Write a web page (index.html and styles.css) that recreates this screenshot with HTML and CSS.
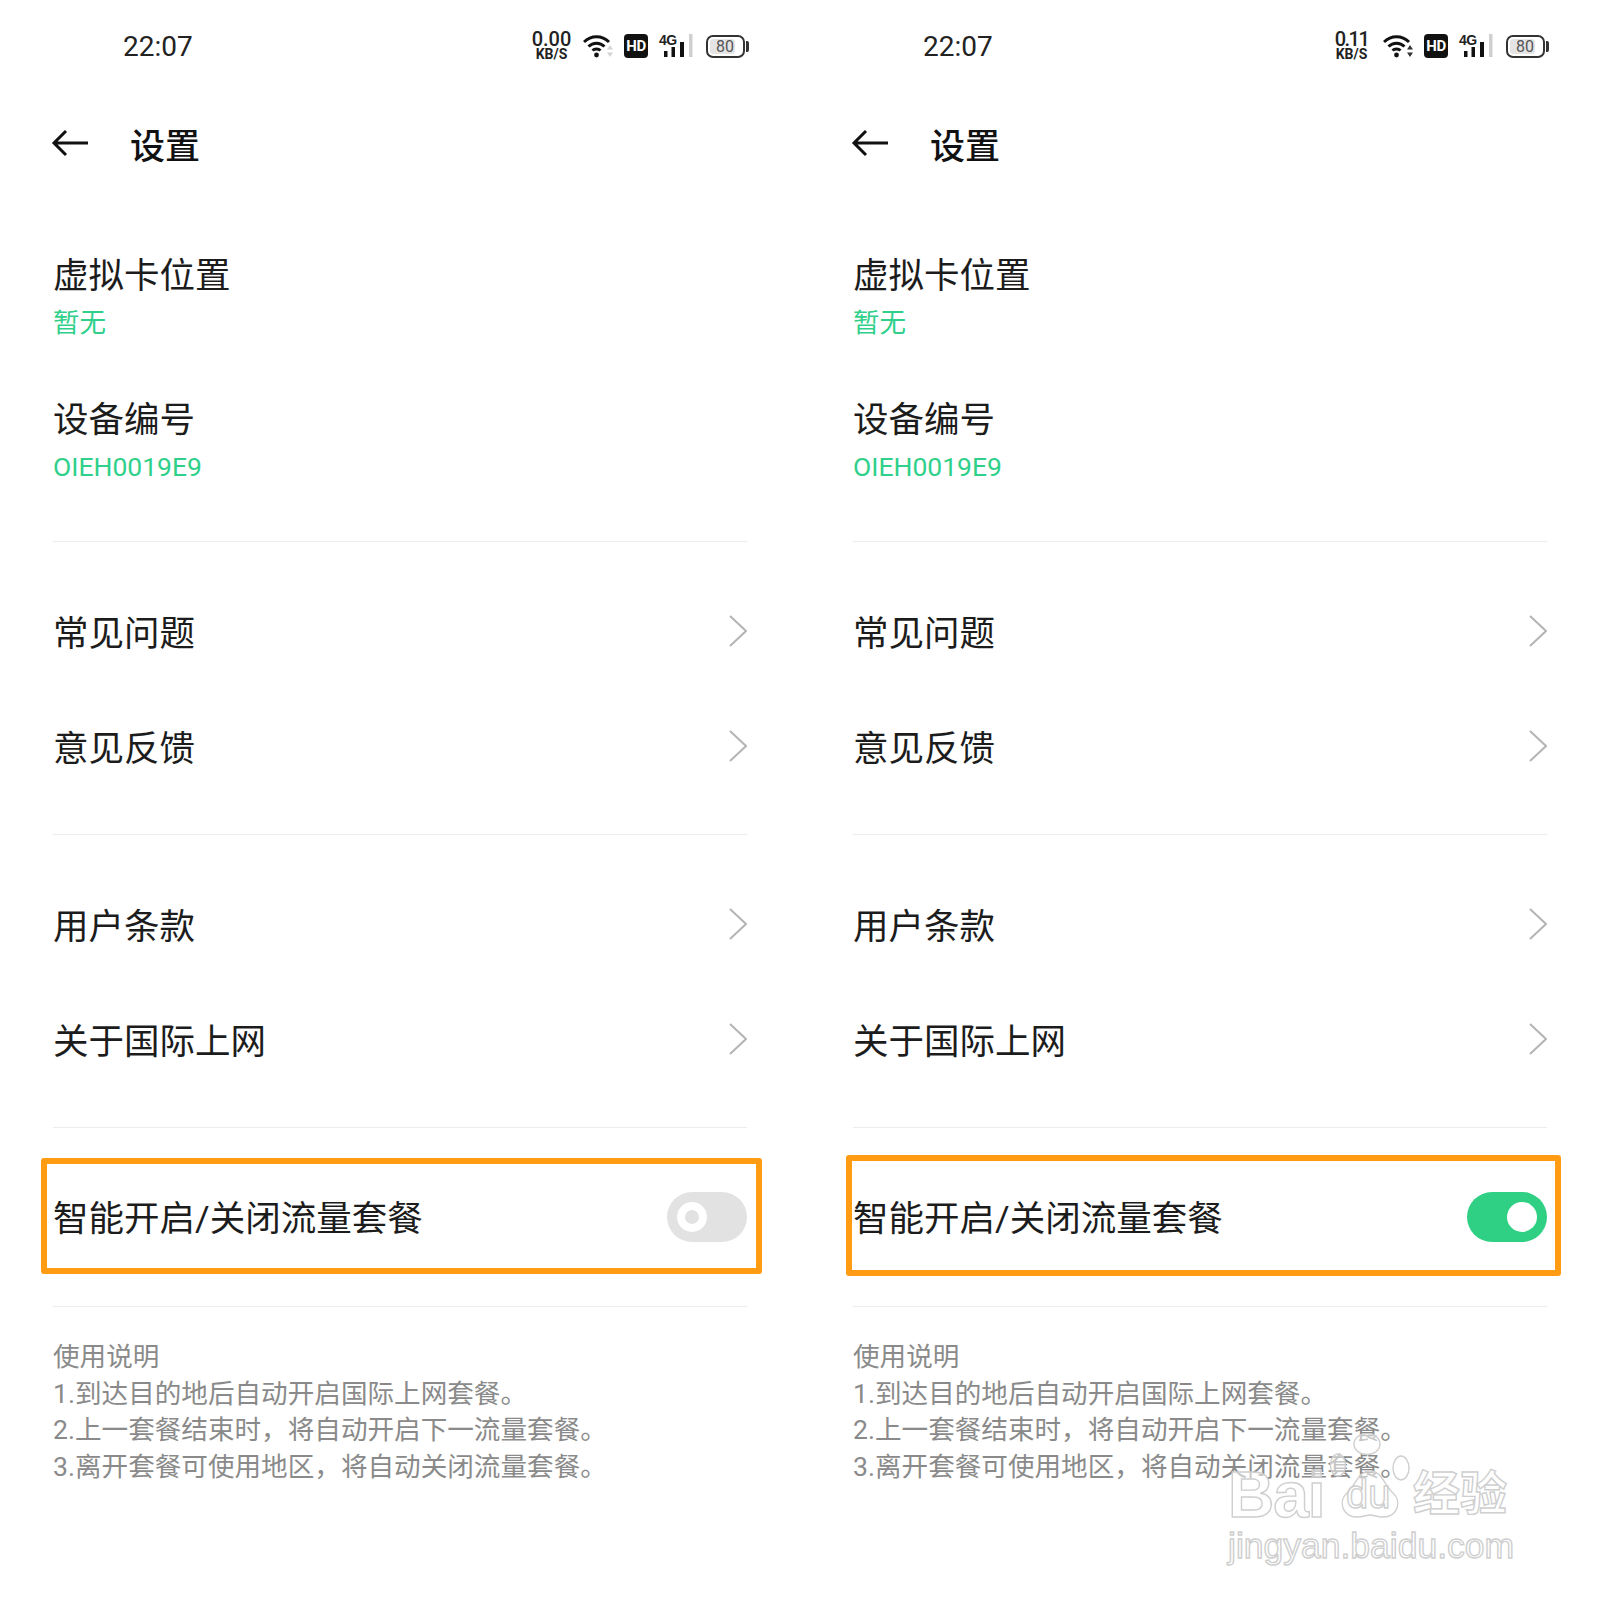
FILE: index.html
```html
<!DOCTYPE html>
<html lang="zh-CN">
<head>
	<meta charset="UTF-8">
	<title>设置</title>
	<link rel="stylesheet" href="styles.css">
</head>
<body>
	<div class="side-by-side-container">
		<!-- before -->
		<div class="phone">
			<div class="status-bar">
				<span class="time">22:07</span>
				<div class="speed"><b>0.00</b><small>KB/S</small></div>
				<svg class="wifi" viewBox="0 0 30 24"><path d="M1 8C8 1 19 1 26 8M5.5 12.5C10 8 17 8 21.5 12.5M9.5 16.5C11.5 14.5 15.5 14.5 17.5 16.5" fill="none" stroke="#111" stroke-width="3"/><circle cx="13.5" cy="21" r="2.4" fill="#111"/><path class="wifi-arrows faint" d="M27 11l-3 4.5h6zM27 23l-3-4.5h6z"/></svg>
				<div class="hd">HD</div>
				<svg class="signal" viewBox="0 0 34 24"><rect x="5" y="17" width="3.5" height="6" fill="#111"/><rect x="12.5" y="13" width="3.5" height="10" fill="#111"/><rect x="21" y="8" width="4" height="15" fill="#111"/><rect x="30" y="0" width="3.5" height="23" fill="#d0d0d0"/><text x="0" y="11" class="signal-label">4G</text></svg>
				<div class="battery"><span class="battery-level">80</span></div>
			</div>
			<div class="title-bar">
				<svg class="back" viewBox="0 0 37 28"><path d="M37 14H3M15 2L3 14l12 12" fill="none" stroke="#111" stroke-width="3"/></svg>
				<h1>设置</h1>
			</div>
			<div class="info-group">
				<div class="info-item"><div class="label">虚拟卡位置</div><div class="value">暂无</div></div>
				<div class="info-item"><div class="label">设备编号</div><div class="value">OIEH0019E9</div></div>
			</div>
			<div class="link-group">
				<div class="link-row"><span class="label">常见问题</span><svg class="chevron" viewBox="0 0 18 32"><path d="M1 1l16 15L1 31" fill="none" stroke="#b4b4b4" stroke-width="2"/></svg></div>
				<div class="link-row"><span class="label">意见反馈</span><svg class="chevron" viewBox="0 0 18 32"><path d="M1 1l16 15L1 31" fill="none" stroke="#b4b4b4" stroke-width="2"/></svg></div>
			</div>
			<div class="link-group">
				<div class="link-row"><span class="label">用户条款</span><svg class="chevron" viewBox="0 0 18 32"><path d="M1 1l16 15L1 31" fill="none" stroke="#b4b4b4" stroke-width="2"/></svg></div>
				<div class="link-row"><span class="label">关于国际上网</span><svg class="chevron" viewBox="0 0 18 32"><path d="M1 1l16 15L1 31" fill="none" stroke="#b4b4b4" stroke-width="2"/></svg></div>
			</div>
			<div class="switch-group">
				<div class="switch-row">
					<span class="label">智能开启/关闭流量套餐</span>
					<div class="toggle"><span class="knob"></span></div>
					<div class="highlight"></div>
				</div>
			</div>
			<div class="notes">
				<div>使用说明</div>
				<div>1.到达目的地后自动开启国际上网套餐。</div>
				<div>2.上一套餐结束时，将自动开启下一流量套餐。</div>
				<div>3.离开套餐可使用地区，将自动关闭流量套餐。</div>
			</div>
		</div>

		<!-- after -->
		<div class="phone">
			<div class="status-bar">
				<span class="time">22:07</span>
				<div class="speed narrow"><b>0.11</b><small>KB/S</small></div>
				<svg class="wifi" viewBox="0 0 30 24"><path d="M1 8C8 1 19 1 26 8M5.5 12.5C10 8 17 8 21.5 12.5M9.5 16.5C11.5 14.5 15.5 14.5 17.5 16.5" fill="none" stroke="#111" stroke-width="3"/><circle cx="13.5" cy="21" r="2.4" fill="#111"/><path class="wifi-arrows" d="M27 11l-3 4.5h6zM27 23l-3-4.5h6z"/></svg>
				<div class="hd">HD</div>
				<svg class="signal" viewBox="0 0 34 24"><rect x="5" y="17" width="3.5" height="6" fill="#111"/><rect x="12.5" y="13" width="3.5" height="10" fill="#111"/><rect x="21" y="8" width="4" height="15" fill="#111"/><rect x="30" y="0" width="3.5" height="23" fill="#d0d0d0"/><text x="0" y="11" class="signal-label">4G</text></svg>
				<div class="battery"><span class="battery-level">80</span></div>
			</div>
			<div class="title-bar">
				<svg class="back" viewBox="0 0 37 28"><path d="M37 14H3M15 2L3 14l12 12" fill="none" stroke="#111" stroke-width="3"/></svg>
				<h1>设置</h1>
			</div>
			<div class="info-group">
				<div class="info-item"><div class="label">虚拟卡位置</div><div class="value">暂无</div></div>
				<div class="info-item"><div class="label">设备编号</div><div class="value">OIEH0019E9</div></div>
			</div>
			<div class="link-group">
				<div class="link-row"><span class="label">常见问题</span><svg class="chevron" viewBox="0 0 18 32"><path d="M1 1l16 15L1 31" fill="none" stroke="#b4b4b4" stroke-width="2"/></svg></div>
				<div class="link-row"><span class="label">意见反馈</span><svg class="chevron" viewBox="0 0 18 32"><path d="M1 1l16 15L1 31" fill="none" stroke="#b4b4b4" stroke-width="2"/></svg></div>
			</div>
			<div class="link-group">
				<div class="link-row"><span class="label">用户条款</span><svg class="chevron" viewBox="0 0 18 32"><path d="M1 1l16 15L1 31" fill="none" stroke="#b4b4b4" stroke-width="2"/></svg></div>
				<div class="link-row"><span class="label">关于国际上网</span><svg class="chevron" viewBox="0 0 18 32"><path d="M1 1l16 15L1 31" fill="none" stroke="#b4b4b4" stroke-width="2"/></svg></div>
			</div>
			<div class="switch-group">
				<div class="switch-row">
					<span class="label">智能开启/关闭流量套餐</span>
					<div class="toggle on"><span class="knob"></span></div>
					<div class="highlight wide"></div>
				</div>
			</div>
			<div class="notes">
				<div>使用说明</div>
				<div>1.到达目的地后自动开启国际上网套餐。</div>
				<div>2.上一套餐结束时，将自动开启下一流量套餐。</div>
				<div>3.离开套餐可使用地区，将自动关闭流量套餐。</div>
			</div>
		</div>
	</div>

	<div class="watermark">
		<div class="watermark-top">
			<span class="wm-bai">Bai</span>
			<div class="wm-paw">
				<svg viewBox="0 0 80 85"><g fill="rgba(255,255,255,.5)" stroke="#cfcfcf" stroke-width="1.4"><ellipse cx="8" cy="32" rx="7.5" ry="11"/><ellipse cx="37" cy="11" rx="13" ry="10.5"/><ellipse cx="71" cy="35" rx="8" ry="12"/><path d="M40 38C28 38 26 52 17 60C8 68 12 84 27 84C34 84 36 82 40 82C44 82 46 84 53 84C68 84 72 68 63 60C54 52 52 38 40 38Z"/></g></svg>
				<span class="wm-du">du</span>
			</div>
			<span class="wm-cn">经验</span>
		</div>
		<div class="wm-url">jingyan.baidu.com</div>
	</div>
</body>
</html>
```

FILE: styles.css
```css
body {
	margin: 0;
	background: #fff;
	color: #1c1c1c;
	font-family: Roboto, "Noto Sans CJK SC", sans-serif;
	position: relative;
}
.side-by-side-container {
	display: grid;
	grid-template-columns: repeat(2, 800px);
	height: 1600px;
}
.phone {
	padding: 0 53px;
}

/* status bar */
.status-bar {
	height: 92px;
	display: flex;
	align-items: center;
	margin-right: -3px;
}
.time {
	margin-left: 70px;
	margin-right: auto;
	font-size: 28px;
	color: #222;
}
.speed {
	width: 39px;
	margin-right: 12px;
	display: flex;
	flex-direction: column;
	align-items: center;
	color: #222;
}
.speed b {
	font-size: 20px;
	font-weight: 500;
	line-height: 17px;
}
.speed.narrow b {
	letter-spacing: -1.5px;
}
.speed small {
	font-size: 14px;
	font-weight: 700;
	line-height: 13px;
}
.wifi {
	width: 30px;
	height: 24px;
	margin-right: 11px;
}
.wifi-arrows {
	fill: #333;
}
.wifi-arrows.faint {
	fill: #d4d4d4;
}
.hd {
	width: 24px;
	height: 24px;
	border-radius: 4px;
	margin-right: 11px;
	background: #111;
	color: #fff;
	font-size: 15px;
	font-weight: 700;
	line-height: 24px;
	text-align: center;
	letter-spacing: -.5px;
}
.signal {
	width: 34px;
	height: 24px;
	margin-right: 13px;
	overflow: visible;
}
.signal-label {
	font-size: 14px;
	font-weight: 700;
	letter-spacing: -.5px;
	fill: #222;
	font-family: "Liberation Sans", sans-serif;
}
.battery {
	width: 39px;
	height: 23px;
	box-sizing: border-box;
	border: 2px solid #333;
	border-radius: 7px;
	margin-right: 5px;
	padding: 2px;
	position: relative;
}
.battery::after {
	content: "";
	position: absolute;
	right: -6px;
	top: 4px;
	width: 3px;
	height: 11px;
	background: #333;
	border-radius: 0 2px 2px 0;
}
.battery-level {
	display: block;
	width: 80%;
	height: 100%;
	background: #e4e4e4;
	border-radius: 3px;
	color: #555;
	font-size: 16px;
	line-height: 15px;
	text-align: center;
	padding-left: 5px;
	box-sizing: border-box;
}

/* title */
.title-bar {
	height: 102px;
	display: flex;
	align-items: center;
}
.back {
	width: 37px;
	height: 28px;
	margin-left: -2px;
	margin-right: 42px;
}
h1 {
	margin: 0;
	font-size: 35px;
	font-weight: 500;
	color: #111;
}

.label {
	font-size: 35.5px;
	line-height: 44px;
	color: #1c1c1c;
}
.value {
	font-size: 26.5px;
	line-height: 50px;
	color: #2fd08a;
}
.info-group {
	padding: 60px 0 49px;
	border-bottom: 1px solid #ececec;
}
.info-item + .info-item {
	margin-top: 50px;
}
.link-group {
	padding: 33px 0 29px;
	border-bottom: 1px solid #ececec;
}
.link-row {
	height: 115px;
	display: flex;
	align-items: center;
	justify-content: space-between;
}
.link-row .label {
	margin-top: 2px;
}
.chevron {
	width: 18px;
	height: 32px;
	margin-top: -4px;
}

/* switch */
.switch-group {
	padding: 31px 0;
	border-bottom: 1px solid #ececec;
}
.switch-row {
	height: 116px;
	display: flex;
	align-items: center;
	justify-content: space-between;
	position: relative;
}
.switch-row .label {
	margin-top: 4px;
}
.toggle {
	width: 80px;
	height: 50px;
	border-radius: 25px;
	background: #e2e2e2;
	display: flex;
	align-items: center;
	padding-left: 10px;
	box-sizing: border-box;
}
.knob {
	width: 30px;
	height: 30px;
	box-sizing: border-box;
	border-radius: 50%;
	border: 8px solid #fff;
}
.toggle.on {
	background: #2fd083;
	justify-content: flex-end;
	padding: 0 10px 0 0;
}
.toggle.on .knob {
	background: #fff;
	border: 0;
}
.highlight {
	position: absolute;
	top: -1px;
	bottom: 1px;
	left: -12px;
	right: -15px;
	border: 6px solid #ff9c14;
	border-radius: 3px;
}
.highlight.wide {
	top: -4px;
	bottom: -1px;
	left: -7px;
	right: -14px;
}

/* usage notes */
.notes {
	padding-top: 32px;
	font-size: 26.6px;
	line-height: 36.7px;
	color: #8a8a8a;
}

/* watermark on top of the right phone */
.watermark {
	position: absolute;
	left: 1228px;
	top: 1433px;
	width: 290px;
}
.watermark-top {
	display: flex;
	align-items: flex-end;
	height: 85px;
}
.wm-bai, .wm-du, .wm-cn, .wm-url {
	color: rgba(255, 255, 255, .55);
	-webkit-text-stroke: 1.4px #cfcfcf;
	font-family: "Liberation Sans", "Noto Sans CJK SC", sans-serif;
}
.wm-bai {
	font-size: 64px;
	font-weight: 700;
	line-height: 46px;
	width: 102px;
	letter-spacing: -1px;
}
.wm-paw {
	width: 80px;
	height: 85px;
	position: relative;
}
.wm-paw svg {
	width: 80px;
	height: 85px;
	display: block;
}
.wm-du {
	position: absolute;
	left: 16px;
	bottom: 2px;
	font-size: 40px;
	line-height: 44px;
}
.wm-cn {
	margin-left: 3px;
	font-size: 47px;
	font-weight: 700;
	line-height: 48px;
}
.wm-url {
	margin-top: 8px;
	font-size: 35.5px;
	line-height: 40px;
	white-space: nowrap;
}
```
